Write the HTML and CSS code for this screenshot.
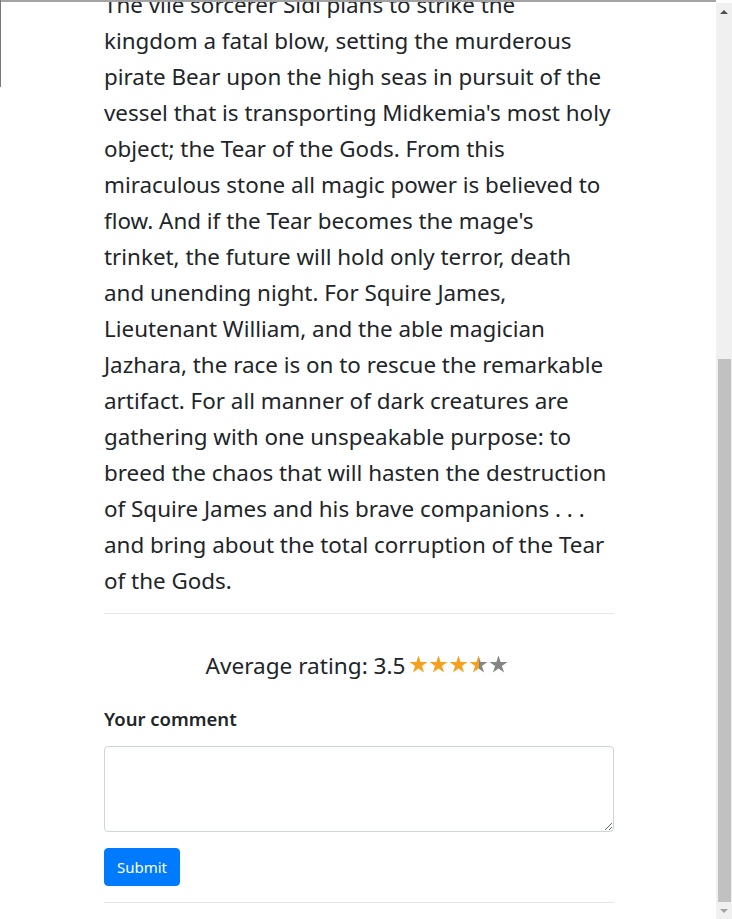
FILE: index.html
```html
<!DOCTYPE html>
<html lang="en">
<head>
<meta charset="utf-8">
<title>Tear of the Gods</title>
<link rel="stylesheet" href="styles.css">
</head>
<body>
<div class="frame">
  <main class="viewport">
    <div class="content">
      <p class="synopsis">The vile sorcerer Sidi plans to strike the<br>
kingdom a fatal blow, setting the murderous<br>
pirate Bear upon the high seas in pursuit of the<br>
vessel that is transporting Midkemia's most holy<br>
object; the Tear of the Gods. From this<br>
miraculous stone all magic power is believed to<br>
flow. And if the Tear becomes the mage's<br>
trinket, the future will hold only terror, death<br>
and unending night. For Squire James,<br>
Lieutenant William, and the able magician<br>
Jazhara, the race is on to rescue the remarkable<br>
artifact. For all manner of dark creatures are<br>
gathering with one unspeakable purpose: to<br>
breed the chaos that will hasten the destruction<br>
of Squire James and his brave companions . . .<br>
and bring about the total corruption of the Tear<br>
of the Gods.</p>
      <hr class="rule">
      <div class="rating">
        <span class="rating-label">Average rating: 3.5</span>
        <span class="stars">
          <svg class="star" viewBox="0 0 20 19" aria-hidden="true"><polygon class="on" points="10,0.5 12.23,7.43 19.51,7.41 13.61,11.67 15.88,18.59 10,14.3 4.12,18.59 6.39,11.67 0.49,7.41 7.77,7.43"/></svg>
          <svg class="star" viewBox="0 0 20 19" aria-hidden="true"><polygon class="on" points="10,0.5 12.23,7.43 19.51,7.41 13.61,11.67 15.88,18.59 10,14.3 4.12,18.59 6.39,11.67 0.49,7.41 7.77,7.43"/></svg>
          <svg class="star" viewBox="0 0 20 19" aria-hidden="true"><polygon class="on" points="10,0.5 12.23,7.43 19.51,7.41 13.61,11.67 15.88,18.59 10,14.3 4.12,18.59 6.39,11.67 0.49,7.41 7.77,7.43"/></svg>
          <svg class="star" viewBox="0 0 20 19" aria-hidden="true"><defs><linearGradient id="half" x1="0" x2="1" y1="0" y2="0"><stop offset="0.5" stop-color="#f4a11f"/><stop offset="0.5" stop-color="#858585"/></linearGradient></defs><polygon fill="url(#half)" points="10,0.5 12.23,7.43 19.51,7.41 13.61,11.67 15.88,18.59 10,14.3 4.12,18.59 6.39,11.67 0.49,7.41 7.77,7.43"/></svg>
          <svg class="star" viewBox="0 0 20 19" aria-hidden="true"><polygon class="off" points="10,0.5 12.23,7.43 19.51,7.41 13.61,11.67 15.88,18.59 10,14.3 4.12,18.59 6.39,11.67 0.49,7.41 7.77,7.43"/></svg>
        </span>
      </div>
      <form class="comment-form">
        <label class="comment-label" for="comment">Your comment</label>
        <textarea id="comment" class="comment-box" rows="3"></textarea>
        <button type="button" class="btn-submit">Submit</button>
      </form>
      <hr class="rule rule-bottom">
    </div>
  </main>
  <div class="scrollbar" aria-hidden="true">
    <div class="arrow arrow-up"></div>
    <div class="track"><div class="thumb"></div></div>
    <div class="arrow arrow-down"></div>
  </div>
</div>
</body>
</html>
```

FILE: styles.css
```css
html, body {
  margin: 0;
  padding: 0;
  height: 100%;
  overflow: hidden;
  background: #fff;
}

body {
  font-family: "Segoe UI", "Noto Sans", "Open Sans", sans-serif;
  color: #212529;
}

.frame {
  position: relative;
  display: flex;
  height: 919px;
  width: 732px;
}

.frame::before {
  content: "";
  position: absolute;
  left: 0;
  top: 0;
  width: 716px;
  height: 2px;
  background: #a3a3a3;
  z-index: 2;
}

.frame::after {
  content: "";
  position: absolute;
  left: 0;
  top: 0;
  width: 1px;
  height: 87px;
  background: #7a7a7a;
  z-index: 2;
}

.viewport {
  flex: 0 0 716px;
  overflow: hidden;
}

.content {
  width: 510px;
  margin-left: 104px;
  margin-top: -13px;
}

.synopsis {
  margin: 0;
  font-size: 22.4px;
  line-height: 36px;
  white-space: nowrap;
}

.rule {
  border: 0;
  border-top: 1px solid #e6e6e6;
  margin: 14px 0 0;
}

.rating {
  display: flex;
  justify-content: center;
  align-items: center;
  gap: 4px;
  margin-top: 33px;
  height: 36px;
  font-size: 22.6px;
  padding-right: 4px;
}

.stars {
  display: flex;
  gap: 1px;
  margin-top: -2px;
}

.star {
  width: 19px;
  height: 18px;
  display: block;
}

.star .on { fill: #f4a11f; }
.star .off { fill: #858585; }

.comment-form {
  display: flex;
  flex-direction: column;
  align-items: flex-start;
  margin-top: 21px;
}

.comment-label {
  font-size: 18.5px;
  font-weight: 600;
  line-height: 30px;
  margin-bottom: 12px;
}

.comment-box {
  box-sizing: border-box;
  width: 510px;
  height: 86px;
  border: 1px solid #ced4da;
  border-radius: 4px;
  padding: 6px 12px;
  font: inherit;
  font-size: 16px;
  line-height: 24px;
  margin: 0;
}

.btn-submit {
  margin-top: 16px;
  height: 38px;
  width: 76px;
  padding: 0;
  border: 1px solid #007bff;
  border-radius: 4px;
  background: #007bff;
  color: #fff;
  font-family: inherit;
  font-size: 15px;
  line-height: 24px;
}

.rule-bottom {
  margin-top: 16px;
}

.scrollbar {
  flex: 0 0 16px;
  margin-top: 3px;
  background: #f0f0f0;
  display: flex;
  flex-direction: column;
}

.arrow {
  flex: 0 0 17px;
  display: flex;
  align-items: center;
  justify-content: center;
}

.arrow::before {
  content: "";
  width: 0;
  height: 0;
  border-left: 4px solid transparent;
  border-right: 4px solid transparent;
}

.arrow-up::before {
  border-bottom: 4px solid #505050;
}

.arrow-down::before {
  border-top: 4px solid #a3a3a3;
}

.track {
  flex: 1;
  display: flex;
  flex-direction: column;
  justify-content: flex-end;
}

.thumb {
  height: 543px;
  margin-left: 2px;
  margin-right: 1px;
  background: #c1c1c1;
}
```
